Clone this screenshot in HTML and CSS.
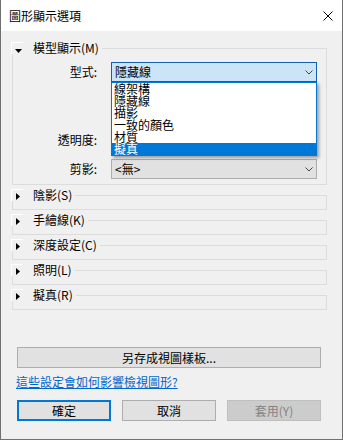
FILE: index.html
```html
<!DOCTYPE html>
<html lang="zh-Hant">
<head>
<meta charset="utf-8">
<title>圖形顯示選項</title>
<link rel="stylesheet" href="styles.css">
</head>
<body>
<div class="win">
  <div class="titlebar">
    <span class="title">圖形顯示選項</span>
    <svg class="close" width="10" height="10" viewBox="0 0 10 10"><path d="M0.5 0.5L9.5 9.5M9.5 0.5L0.5 9.5" stroke="#000" stroke-width="1" fill="none"/></svg>
  </div>
  <div class="content">
    <div class="groups">
      <section class="grp">
        <div class="grp-head">
          <span class="tbtn"><svg class="down" width="7" height="4" viewBox="0 0 7 4"><polygon points="0,0 7,0 3.5,4" fill="#000"/></svg></span>
          <span class="grp-title">模型顯示(M)</span>
          <span class="grp-line"></span>
        </div>
        <div class="grp-body open">
          <div class="row">
            <span class="lbl">型式:</span>
            <div class="combo focus">
              <span class="combo-text">隱藏線</span>
              <svg class="chev" width="8" height="5" viewBox="0 0 8 5"><path d="M0.5 0.5L4 4L7.5 0.5" stroke="#444" stroke-width="1" fill="none"/></svg>
              <div class="droplist">
                <div class="item">線架構</div>
                <div class="item">隱藏線</div>
                <div class="item">描影</div>
                <div class="item">一致的顏色</div>
                <div class="item">材質</div>
                <div class="item sel">擬真</div>
              </div>
            </div>
          </div>
          <div class="row r-trans">
            <span class="lbl">透明度:</span>
          </div>
          <div class="row r-sil">
            <span class="lbl">剪影:</span>
            <div class="combo">
              <span class="combo-text">&lt;無&gt;</span>
              <svg class="chev" width="8" height="5" viewBox="0 0 8 5"><path d="M0.5 0.5L4 4L7.5 0.5" stroke="#444" stroke-width="1" fill="none"/></svg>
            </div>
          </div>
        </div>
      </section>
      <section class="grp">
        <div class="grp-head">
          <span class="tbtn"><svg class="right" width="4" height="7" viewBox="0 0 4 7"><polygon points="0,0 4,3.5 0,7" fill="#000"/></svg></span>
          <span class="grp-title">陰影(S)</span>
          <span class="grp-line"></span>
        </div>
        <div class="grp-body"></div>
      </section>
      <section class="grp">
        <div class="grp-head">
          <span class="tbtn"><svg class="right" width="4" height="7" viewBox="0 0 4 7"><polygon points="0,0 4,3.5 0,7" fill="#000"/></svg></span>
          <span class="grp-title">手繪線(K)</span>
          <span class="grp-line"></span>
        </div>
        <div class="grp-body"></div>
      </section>
      <section class="grp">
        <div class="grp-head">
          <span class="tbtn"><svg class="right" width="4" height="7" viewBox="0 0 4 7"><polygon points="0,0 4,3.5 0,7" fill="#000"/></svg></span>
          <span class="grp-title">深度設定(C)</span>
          <span class="grp-line"></span>
        </div>
        <div class="grp-body"></div>
      </section>
      <section class="grp">
        <div class="grp-head">
          <span class="tbtn"><svg class="right" width="4" height="7" viewBox="0 0 4 7"><polygon points="0,0 4,3.5 0,7" fill="#000"/></svg></span>
          <span class="grp-title">照明(L)</span>
          <span class="grp-line"></span>
        </div>
        <div class="grp-body"></div>
      </section>
      <section class="grp">
        <div class="grp-head">
          <span class="tbtn"><svg class="right" width="4" height="7" viewBox="0 0 4 7"><polygon points="0,0 4,3.5 0,7" fill="#000"/></svg></span>
          <span class="grp-title">擬真(R)</span>
          <span class="grp-line"></span>
        </div>
        <div class="grp-body"></div>
      </section>
    </div>
    <button class="btn wide">另存成視圖樣板...</button>
    <a class="link">這些設定會如何影響檢視圖形?</a>
    <div class="btnrow">
      <button class="btn default">確定</button>
      <button class="btn">取消</button>
      <button class="btn disabled">套用(Y)</button>
    </div>
  </div>
</div>
</body>
</html>
```
FILE: styles.css
```css
* { box-sizing: border-box; }
html, body { margin: 0; padding: 0; }
body {
  width: 343px;
  height: 440px;
  background: #f0f0f0;
  font-family: "Noto Sans CJK TC", "Noto Sans", sans-serif;
  font-size: 12px;
  color: #000;
}
.win {
  width: 343px;
  height: 440px;
  border: 1px solid #707070;
  border-top: 0;
  background: #f0f0f0;
  display: flex;
  flex-direction: column;
}
.titlebar {
  flex: none;
  height: 31px;
  background: #fff;
  display: flex;
  align-items: center;
  justify-content: space-between;
  padding: 0 9px 0 8px;
}
.title { line-height: 14px; }
.close { display: block; }
.content {
  flex: 1;
  display: flex;
  flex-direction: column;
  padding-top: 11px;
}
.groups {
  margin: 0 15px 0 10px;
  display: flex;
  flex-direction: column;
  gap: 4px;
}
.grp-head {
  display: flex;
  height: 12px;
  position: relative;
  z-index: 1;
}
.tbtn {
  flex: none;
  width: 12px;
  height: 12px;
  border-top: 1px solid #fff;
  border-left: 1px solid #fff;
  background: #f0f0f0;
  position: relative;
}
.tbtn svg { position: absolute; display: block; }
.tbtn .down { left: 3px; top: 6px; }
.tbtn .right { left: 4px; top: 3px; }
.grp-title {
  margin-left: 10px;
  line-height: 12px;
  white-space: nowrap;
}
.grp-line {
  flex: 1;
  height: 0;
  margin: 6px 0 0 3px;
  border-top: 1px solid #dcdcdc;
}
.grp-body {
  margin: -6px 0 0 1px;
  border: 1px solid #dcdcdc;
  border-top: 0;
  height: 15px;
}
.grp-body.open {
  height: auto;
  padding: 14px 9px 5px 0;
}
.row {
  display: grid;
  grid-template-columns: 84px 206px;
  column-gap: 14px;
  height: 20px;
  align-items: center;
}
.r-trans { margin-top: 48px; }
.r-sil { margin-top: 9px; }
.lbl {
  text-align: right;
  line-height: 14px;
  white-space: nowrap;
}
.combo {
  position: relative;
  height: 20px;
  border: 1px solid #adadad;
  background: #e1e1e1;
  display: flex;
  align-items: center;
  justify-content: space-between;
  padding: 0 3px 0 3px;
}
.combo.focus {
  border-color: #1160b0;
  background: #cce4f7;
}
.combo-text { line-height: 14px; }
.chev { display: block; }
.droplist {
  position: absolute;
  left: -1px;
  top: 19px;
  width: 206px;
  border: 1px solid #0078d7;
  background: #fff;
  box-shadow: 2px 2px 3px rgba(0, 0, 0, 0.35);
  z-index: 5;
}
.item {
  height: 12px;
  line-height: 12px;
  padding-left: 2px;
  white-space: nowrap;
}
.item.sel {
  background: #0078d7;
  color: #fff;
}
.btn {
  height: 21px;
  border: 1px solid #adadad;
  background: #e1e1e1;
  font-family: inherit;
  font-size: 12px;
  line-height: 14px;
  color: #000;
  padding: 0;
  margin: 0;
}
.wide { margin: 37px 21px 0 16px; }
.link {
  align-self: flex-start;
  margin: 7px 0 0 15px;
  line-height: 14px;
  color: #0066cc;
  text-decoration: underline;
}
.btnrow {
  margin: 11px 0 0 16px;
  display: grid;
  grid-template-columns: repeat(3, 94px);
  column-gap: 11px;
}
.default { border: 2px solid #0078d7; }
.disabled {
  background: #cccccc;
  border-color: #bfbfbf;
  color: #838383;
}
```
